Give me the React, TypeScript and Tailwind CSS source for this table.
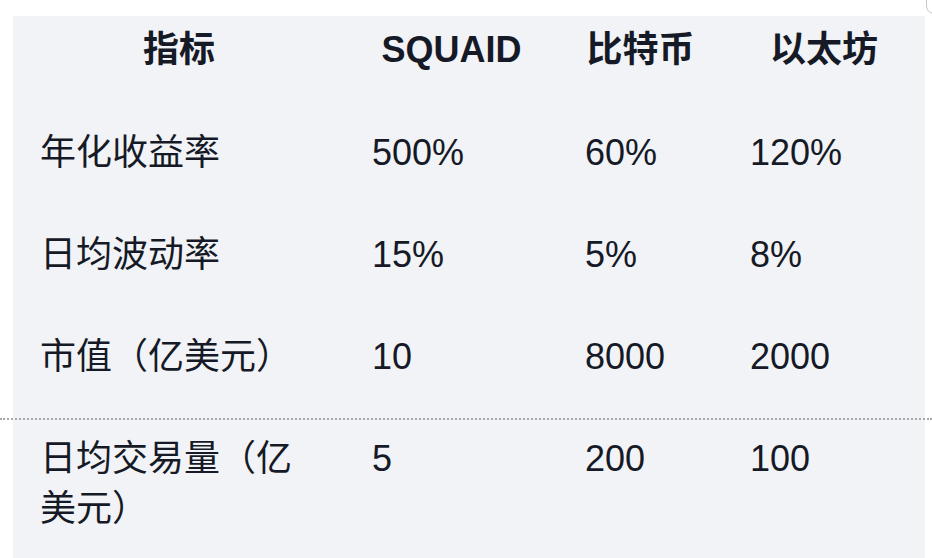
import React from "react";

const rows: [string, string, string, string][] = [
  ["年化收益率", "500%", "60%", "120%"],
  ["日均波动率", "15%", "5%", "8%"],
  ["市值（亿美元）", "10", "8000", "2000"],
  ["日均交易量（亿美元）", "5", "200", "100"],
];

const headers = ["指标", "SQUAID", "比特币", "以太坊"];

export default function App() {
  return (
    <div
      className="relative w-[932px] h-[558px] overflow-hidden bg-white pt-[16px] pl-[13px]"
      style={{ fontFamily: '"Liberation Sans", "Noto Sans CJK SC", sans-serif' }}
    >
      <div className="w-[912px] h-[542px] bg-[#f1f3f7] text-[#161a26] text-[36px] leading-[50px]">
        <div className="grid grid-cols-[332px_213px_165px_202px] h-[86px] pt-[9px] font-bold">
          {headers.map((h) => (
            <div key={h} className="text-center">
              {h}
            </div>
          ))}
        </div>
        {rows.map((r) => (
          <div key={r[0]} className="grid grid-cols-[332px_213px_165px_202px] py-[26px]">
            {r.map((c, i) => (
              <div key={i} className="px-[27px]">
                {c}
              </div>
            ))}
          </div>
        ))}
      </div>
      <div className="absolute left-0 right-0 top-[418px] border-t-2 border-dotted border-[#a8a8a8]" />
      <div className="absolute right-[-10px] top-[-8px] w-[16px] h-[22px] rounded-[8px] border border-[#c8c8c8]" />
    </div>
  );
}
